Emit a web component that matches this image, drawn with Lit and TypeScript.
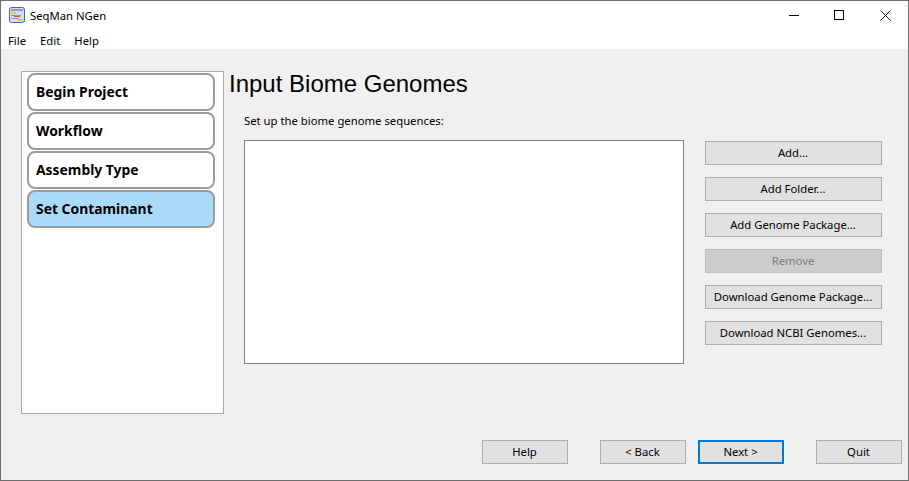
import { LitElement, css, html } from "lit";
import { customElement } from "lit/decorators.js";

const STEPS = ["Begin Project", "Workflow", "Assembly Type", "Set Contaminant"];
const ACTIONS = [
  "Add...",
  "Add Folder...",
  "Add Genome Package...",
  "Remove",
  "Download Genome Package...",
  "Download NCBI Genomes...",
];

@customElement("app-root")
export class AppRoot extends LitElement {
  static styles = css`
    :host {
      display: flex;
      flex-direction: column;
      box-sizing: border-box;
      width: 909px;
      height: 481px;
      border: 1px solid #6e6e6e;
      background: #f0f0f0;
      font-family: "Noto Sans", "Open Sans", sans-serif;
      font-size: 11.3px;
      color: #000;
      overflow: hidden;
    }
    .titlebar {
      display: flex;
      align-items: center;
      box-sizing: border-box;
      height: 29px;
      background: #fff;
      padding: 0 0 1px 8px;
    }
    .app-icon {
      width: 16px;
      height: 16px;
      margin-right: 5px;
    }
    .title {
      flex: 1;
    }
    .win-btn {
      display: flex;
      align-items: center;
      box-sizing: border-box;
      width: 45px;
      height: 28px;
      padding-left: 17px;
    }
    .win-btn.close {
      width: 46px;
      padding-left: 18px;
    }
    .menubar {
      display: flex;
      gap: 14px;
      height: 19px;
      padding-left: 7px;
      background: #fff;
      line-height: 21px;
    }
    .content {
      flex: 1;
      display: flex;
      flex-direction: column;
      padding: 22px 6px 16px 20px;
    }
    .main {
      flex: 1;
      display: flex;
    }
    .sidebar {
      box-sizing: border-box;
      display: flex;
      flex-direction: column;
      gap: 1px;
      width: 203px;
      height: 343px;
      padding: 1px 8px 0 5px;
      background: #fff;
      border: 1px solid #a9a9a9;
    }
    .step {
      box-sizing: border-box;
      height: 38px;
      padding-left: 7px;
      border: 2px solid #9b9b9b;
      border-radius: 8px;
      background: #fff;
      font-size: 13.9px;
      font-weight: 700;
      line-height: 34px;
    }
    .step.active {
      background: #aadaf9;
    }
    .panel {
      flex: 1;
      display: flex;
      flex-direction: column;
      margin-left: 5px;
    }
    h1 {
      margin: 0;
      height: 28px;
      font-family: "Liberation Sans", Arial, sans-serif;
      font-size: 24px;
      font-weight: 400;
      line-height: 26px;
    }
    .body {
      padding-left: 15px;
    }
    .label {
      height: 41px;
      line-height: 44px;
    }
    .row {
      display: flex;
    }
    .list {
      box-sizing: border-box;
      width: 440px;
      height: 224px;
      background: #fff;
      border: 1px solid #7f7f7f;
    }
    .actions {
      display: flex;
      flex-direction: column;
      gap: 12px;
      margin: 1px 0 0 21px;
    }
    button {
      box-sizing: border-box;
      height: 24px;
      padding: 0 1px 2px 0;
      background: #e1e1e1;
      border: 1px solid #adadad;
      border-radius: 0;
      font: inherit;
      color: #000;
    }
    .actions button {
      width: 177px;
    }
    button:disabled {
      background: #cccccc;
      border-color: #bfbfbf;
      color: #808080;
    }
    .footer {
      display: flex;
      justify-content: flex-end;
    }
    .footer button {
      width: 86px;
    }
    .footer .help {
      margin-right: 32px;
    }
    .footer .next {
      margin: 0 32px 0 12px;
      border: 2px solid #0078d7;
    }
  `;

  render() {
    return html`
      <div class="titlebar">
        <svg class="app-icon" viewBox="0 0 16 16">
          <rect x="0.5" y="0.5" width="15" height="15" rx="2" fill="#d5dcf0" stroke="#4a5fa5" />
          <rect x="2" y="2" width="12" height="2" fill="#8a9ccb" />
          <rect x="2" y="5" width="5" height="2" fill="#c8d84a" />
          <rect x="2" y="8" width="10" height="1" fill="#7f93c6" />
          <rect x="5" y="9" width="6" height="1" fill="#d8505a" />
          <rect x="2" y="11" width="8" height="1" fill="#b58ac8" />
          <rect x="9" y="12" width="5" height="2" fill="#c8d84a" />
        </svg>
        <span class="title">SeqMan NGen</span>
        <div class="win-btn">
          <svg width="10" height="10" viewBox="0 0 10 10"><path d="M0 5.5H10" stroke="#000" fill="none" /></svg>
        </div>
        <div class="win-btn">
          <svg width="10" height="10" viewBox="0 0 10 10"><rect x="0.5" y="0.5" width="9" height="9" stroke="#000" fill="none" /></svg>
        </div>
        <div class="win-btn close">
          <svg width="11" height="11" viewBox="0 0 11 11"><path d="M0.5 0.5L10.5 10.5M10.5 0.5L0.5 10.5" stroke="#000" stroke-width="0.9" fill="none" /></svg>
        </div>
      </div>
      <div class="menubar">
        <span>File</span>
        <span>Edit</span>
        <span>Help</span>
      </div>
      <div class="content">
        <div class="main">
          <div class="sidebar">
            ${STEPS.map(
              (s, i) => html`<div class="step ${i === 3 ? "active" : ""}">${s}</div>`,
            )}
          </div>
          <div class="panel">
            <h1>Input Biome Genomes</h1>
            <div class="body">
              <div class="label">Set up the biome genome sequences:</div>
              <div class="row">
                <div class="list"></div>
                <div class="actions">
                  ${ACTIONS.map(
                    (a) => html`<button ?disabled=${a === "Remove"}>${a}</button>`,
                  )}
                </div>
              </div>
            </div>
          </div>
        </div>
        <div class="footer">
          <button class="help">Help</button>
          <button>&lt; Back</button>
          <button class="next">Next &gt;</button>
          <button>Quit</button>
        </div>
      </div>
    `;
  }
}
